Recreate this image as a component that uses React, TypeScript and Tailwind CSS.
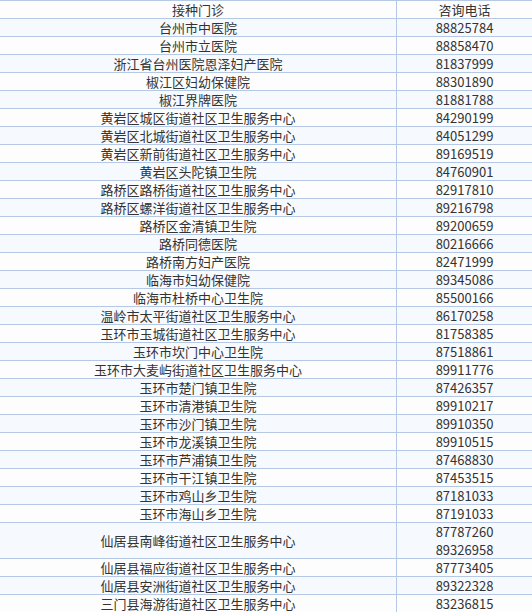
import React from "react";

const rows: [string, string[]][] = [
  ["台州市中医院", ["88825784"]],
  ["台州市立医院", ["88858470"]],
  ["浙江省台州医院恩泽妇产医院", ["81837999"]],
  ["椒江区妇幼保健院", ["88301890"]],
  ["椒江界牌医院", ["81881788"]],
  ["黄岩区城区街道社区卫生服务中心", ["84290199"]],
  ["黄岩区北城街道社区卫生服务中心", ["84051299"]],
  ["黄岩区新前街道社区卫生服务中心", ["89169519"]],
  ["黄岩区头陀镇卫生院", ["84760901"]],
  ["路桥区路桥街道社区卫生服务中心", ["82917810"]],
  ["路桥区螺洋街道社区卫生服务中心", ["89216798"]],
  ["路桥区金清镇卫生院", ["89200659"]],
  ["路桥同德医院", ["80216666"]],
  ["路桥南方妇产医院", ["82471999"]],
  ["临海市妇幼保健院", ["89345086"]],
  ["临海市杜桥中心卫生院", ["85500166"]],
  ["温岭市太平街道社区卫生服务中心", ["86170258"]],
  ["玉环市玉城街道社区卫生服务中心", ["81758385"]],
  ["玉环市坎门中心卫生院", ["87518861"]],
  ["玉环市大麦屿街道社区卫生服务中心", ["89911776"]],
  ["玉环市楚门镇卫生院", ["87426357"]],
  ["玉环市清港镇卫生院", ["89910217"]],
  ["玉环市沙门镇卫生院", ["89910350"]],
  ["玉环市龙溪镇卫生院", ["89910515"]],
  ["玉环市芦浦镇卫生院", ["87468830"]],
  ["玉环市干江镇卫生院", ["87453515"]],
  ["玉环市鸡山乡卫生院", ["87181033"]],
  ["玉环市海山乡卫生院", ["87191033"]],
  ["仙居县南峰街道社区卫生服务中心", ["87787260", "89326958"]],
  ["仙居县福应街道社区卫生服务中心", ["87773405"]],
  ["仙居县安洲街道社区卫生服务中心", ["89322328"]],
  ["三门县海游街道社区卫生服务中心", ["83236815"]],
];

function Row({ name, phones, idx }: { name: string; phones: string[]; idx: number }) {
  const bg = idx % 2 === 0 ? "bg-[#fdfdfd]" : "bg-[#f6f9fe]";
  const h = phones.length > 1 ? "h-[36px]" : "h-[18px]";
  return (
    <div className={`flex border-t border-[#b5c8e6] ${bg} ${h}`}>
      <div className="w-[397px] shrink-0 flex items-center justify-center border-r border-[#b5c8e6] leading-[17px]">
        {name}
      </div>
      <div className="flex-1 flex flex-col items-center justify-center leading-[17px]">
        {phones.map((p, i) => (
          <div key={i} className={phones.length > 1 ? "leading-[18px]" : "leading-[17px]"}>
            {p}
          </div>
        ))}
      </div>
    </div>
  );
}

export default function App() {
  return (
    <div
      className="w-[532px] h-[612px] overflow-hidden bg-white text-[13px] text-[#333333]"
      style={{ fontFamily: '"Noto Sans CJK SC", "Noto Sans", sans-serif' }}
    >
      <Row name="接种门诊" phones={["咨询电话"]} idx={0} />
      {rows.map(([n, p], i) => (
        <Row key={i} name={n} phones={p} idx={i + 1} />
      ))}
    </div>
  );
}
